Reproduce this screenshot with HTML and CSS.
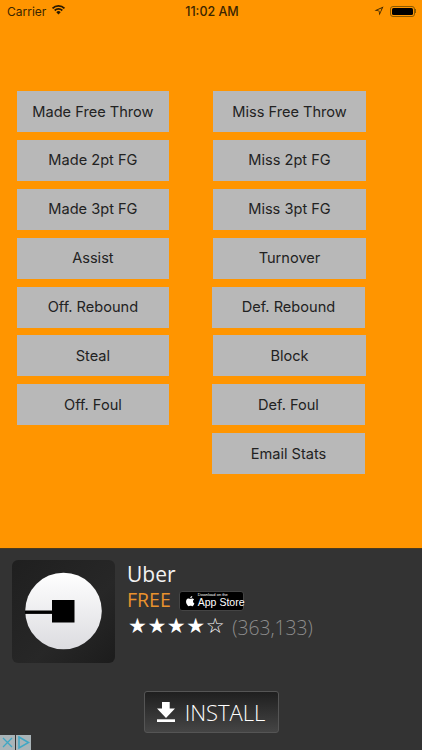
FILE: index.html
```html
<!DOCTYPE html>
<html lang="en">
<head>
<meta charset="utf-8">
<title>Stats</title>
<link rel="stylesheet" href="styles.css">
</head>
<body>
<div class="app">
  <header class="status">
    <div class="status-left">
      <span>Carrier</span>
      <svg class="wifi" viewBox="0 0 16 12"><path d="M8 11.500 5.600 8.900a3.400 3.400 0 0 1 4.800 0Z"/><path d="M4.500 7.800 3.200 6.400a6.800 6.800 0 0 1 9.600 0l-1.300 1.400a5 5 0 0 0-7 0Z"/><path d="M2.200 5.400.8 4a10.200 10.200 0 0 1 14.400 0l-1.400 1.400a8.200 8.200 0 0 0-11.600 0Z"/></svg>
    </div>
    <div class="status-time">11:02 AM</div>
    <div class="status-right">
      <svg class="loc" viewBox="0 0 10 10"><path d="M9.500.5 .5 4.600l4.200.7.700 4.200ZM7.700 2.300 3.200 4.300l2.200.4.400 2.200Z" fill-rule="evenodd"/></svg>
      <div class="battery"><div class="battery-fill"></div></div>
      <div class="battery-cap"></div>
    </div>
  </header>
  <main class="board">
    <div class="btn">Made Free Throw</div><div class="btn">Miss Free Throw</div>
    <div class="btn">Made 2pt FG</div><div class="btn">Miss 2pt FG</div>
    <div class="btn">Made 3pt FG</div><div class="btn">Miss 3pt FG</div>
    <div class="btn">Assist</div><div class="btn">Turnover</div>
    <div class="btn">Off. Rebound</div><div class="btn nudge">Def. Rebound</div>
    <div class="btn">Steal</div><div class="btn">Block</div>
    <div class="btn">Off. Foul</div><div class="btn nudge">Def. Foul</div>
    <div class="btn empty"></div><div class="btn nudge">Email Stats</div>
  </main>
  <section class="ad">
    <div class="ad-top">
      <div class="ad-icon">
        <svg viewBox="0 0 103 103">
          <defs><linearGradient id="disc" x1="0" y1="0" x2="0" y2="1"><stop offset="0" stop-color="#fff"/><stop offset="1" stop-color="#dcdce0"/></linearGradient></defs>
          <circle cx="51.500" cy="51" r="38.300" fill="url(#disc)"/>
          <rect x="13" y="50.500" width="30" height="3.400"/>
          <rect x="40" y="40" width="22.500" height="22.500"/>
        </svg>
      </div>
      <div class="ad-info">
        <div class="ad-name">Uber</div>
        <div class="ad-price">
          <span class="free">FREE</span>
          <div class="store">
            <svg class="apple" viewBox="0 0 12 14"><path fill="#fff" d="M9.600 7.400c0-1.500 1.200-2.200 1.300-2.300-.7-1-1.800-1.200-2.200-1.200-.9-.1-1.800.6-2.300.6s-1.200-.6-2-.6C3.300 3.900 2.300 4.500 1.800 5.400.7 7.300 1.500 10.100 2.600 11.600c.5.800 1.100 1.600 1.900 1.600s1.100-.5 2-.5 1.200.5 2 .5 1.400-.8 1.900-1.500c.6-.9.800-1.700.8-1.800 0 0-1.600-.6-1.600-2.500ZM8.100 2.900c.4-.5.700-1.200.6-1.900-.6 0-1.300.4-1.800.9-.4.400-.7 1.200-.6 1.800.7.100 1.400-.3 1.800-.8Z"/></svg>
            <div class="store-text"><span class="store-small">Download on the</span><span class="store-big">App Store</span></div>
          </div>
        </div>
        <div class="ad-rating"><span class="stars">★★★★☆</span><span class="count">(363,133)</span></div>
      </div>
    </div>
    <div class="ad-action">
      <div class="install">
        <svg class="dl" viewBox="0 0 18 20"><path fill="#fff" d="M5 0h7.700v6.500H18L9 16 0 6.500h5Z"/><rect fill="#fff" y="17.300" width="18" height="2.700"/></svg>
        <span>INSTALL</span>
      </div>
    </div>
    <div class="adchoices">
      <div class="chip"><svg viewBox="0 0 15 15"><path d="M3 3l9 9M12 3l-9 9" stroke="#3fa7c4" stroke-width="1.300" fill="none"/></svg></div>
      <div class="chip"><svg viewBox="0 0 15 15"><path d="M3 2l9.500 5.500L3 13Z" stroke="#3fa7c4" stroke-width="1.500" fill="none"/></svg></div>
    </div>
  </section>
</div>
</body>
</html>
```
FILE: styles.css
```css
* { box-sizing: border-box; }
html, body { margin: 0; padding: 0; }
body { font-family: Inter, "Liberation Sans", sans-serif; }
.app { width: 422px; height: 750px; background: #ff9500; display: flex; flex-direction: column; overflow: hidden; }
.status { height: 22px; padding: 0 6px 0 7px; display: flex; align-items: center; justify-content: space-between; color: #3a2500; font-size: 12px; position: relative; }
.status-left { display: flex; align-items: center; gap: 5px; }
.wifi { width: 15px; height: 11px; fill: #2a1a00; margin-top: -3px; }
.status-time { position: absolute; left: 2px; right: 0; text-align: center; font-weight: 500; font-size: 12.500px; }
.status-right { display: flex; align-items: center; }
.loc { width: 10px; height: 10px; fill: #3a2500; margin-right: 6px; }
.battery { width: 25px; height: 11px; border: 1px solid #8a5a00; border-radius: 3px; padding: 1px; }
.battery-fill { width: 100%; height: 100%; background: #000; border-radius: 1.500px; }
.battery-cap { width: 1px; height: 4px; background: #8a5a00; }
.board { flex: 1; padding: 69px 0 0 16.600px; display: grid; grid-template-columns: 152.600px 153px; column-gap: 43.800px; grid-auto-rows: 41px; row-gap: 7.900px; align-content: start; }
.btn { background: #b8b8b8; color: #222; font-size: 14.600px; display: flex; align-items: center; justify-content: center; }
.nudge { transform: translateX(-1px); }
.empty { visibility: hidden; }
.ad { height: 202px; background: #333; border-top: 1px solid #4a3a20; position: relative; padding: 11px 0 0 12px; }
.ad-top { display: flex; gap: 12px; }
.ad-icon { width: 103px; height: 103px; border-radius: 6px; background: linear-gradient(135deg, #1f1f1f, #272727 60%, #1c1c1c); }
.ad-icon svg { display: block; width: 103px; height: 103px; }
.ad-info { font-family: "Open Sans", sans-serif; display: flex; flex-direction: column; }
.ad-name { color: #f2f2f2; font-size: 21px; line-height: 27px; margin-top: 1px; }
.ad-price { display: flex; align-items: center; gap: 8px; height: 24px; }
.free { color: #e9922d; font-size: 19.500px; line-height: 24px; }
.store { width: 65px; height: 20px; margin-top: 1px; background: #000; border: 1px solid #444; border-radius: 3px; display: flex; align-items: center; gap: 3px; padding-left: 5px; color: #fff; }
.apple { width: 10px; height: 12px; flex: none; }
.store-text { display: flex; flex-direction: column; line-height: 1; font-family: "Liberation Sans", sans-serif; white-space: nowrap; }
.store-small { font-size: 4px; }
.store-big { font-size: 10.500px; }
.ad-rating { display: flex; align-items: center; gap: 10px; margin-top: 1px; padding-left: 1px; white-space: nowrap; }
.stars { color: #fff; font-family: "DejaVu Sans", sans-serif; font-size: 21px; letter-spacing: 0.600px; line-height: 20px; }
.count { color: #8e8e8e; font-size: 19.300px; font-weight: 300; line-height: 22px; padding-top: 4px; margin-left: -3px; }
.ad-action { display: flex; justify-content: center; margin: 28px 0 0 -12px; }
.install { width: 135px; height: 42px; border: 1px solid #555; border-radius: 3px; background: linear-gradient(#1f1f1f, #454545); display: flex; align-items: center; justify-content: center; gap: 10px; color: #fff; font-family: "Open Sans", sans-serif; font-size: 22px; font-weight: 300; }
.dl { width: 18px; height: 20px; }
.adchoices { position: absolute; left: 0; bottom: 0; display: flex; gap: 1px; }
.chip { width: 15px; height: 15px; background: #a9b4b8; }
.chip svg { display: block; width: 15px; height: 15px; }
```
